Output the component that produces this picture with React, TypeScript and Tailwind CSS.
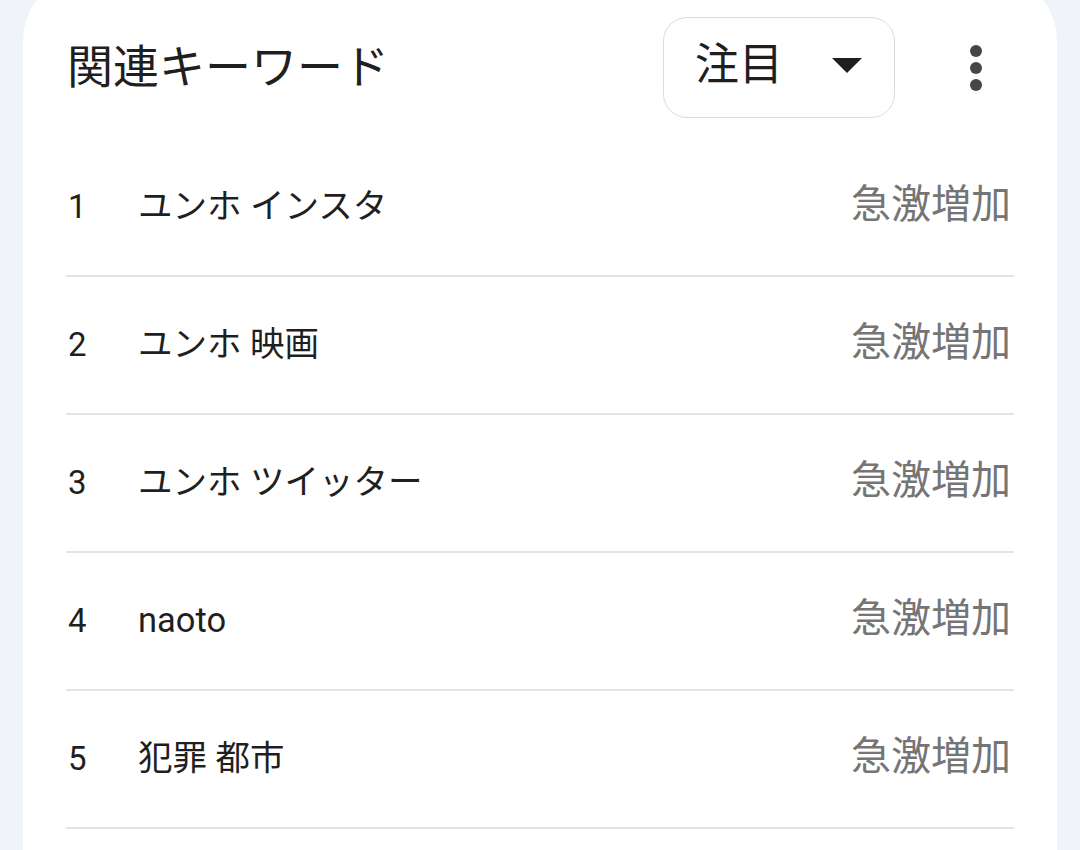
import React from "react";

const rows = [
  { n: 1, text: "ユンホ インスタ" },
  { n: 2, text: "ユンホ 映画" },
  { n: 3, text: "ユンホ ツイッター" },
  { n: 4, text: "naoto" },
  { n: 5, text: "犯罪 都市" },
];

const font = { fontFamily: 'Roboto, "Noto Sans CJK JP", sans-serif' };

export default function App() {
  return (
    <div className="w-[1080px] h-[850px] overflow-hidden bg-[#f0f4f9]" style={font}>
      <div className="ml-[23px] w-[1034px] mt-[-30px] h-[900px] bg-white rounded-t-[72px] px-[43px] pt-[30px]">
        <div className="h-[139px] flex items-center">
          <div className="flex-1 pl-[1px] pb-[6px] text-[46px] leading-none text-[#1f1f1f]">関連キーワード</div>
          <div className="w-[232px] h-[101px] mb-[5px] rounded-[24px] border-[1.5px] border-[#dcdcdc] flex items-center pl-[31px] pr-[32px]">
            <span className="flex-1 text-[44px] leading-none text-[#1f1f1f] pb-[4px]">注目</span>
            <svg width="30" height="16" viewBox="0 0 30 16" className="mb-[2px]">
              <path d="M0 0 L30 0 L15 15 Z" fill="#1f1f1f" />
            </svg>
          </div>
          <div className="ml-[57px] mr-[14px] mb-[4px] w-12 flex flex-col items-center gap-[5px]">
            <span className="w-3 h-3 rounded-full bg-[#444746]" />
            <span className="w-3 h-3 rounded-full bg-[#444746]" />
            <span className="w-3 h-3 rounded-full bg-[#444746]" />
          </div>
        </div>
        {rows.map((r) => (
          <div key={r.n} className="h-[138px] border-b-2 border-[#e3e3e3] flex items-center pb-[2px]">
            <span className="w-[72px] pl-[2px] text-[33px] leading-none text-[#1f1f1f]">{r.n}</span>
            <span className="flex-1 text-[34.5px] leading-none text-[#1f1f1f]">{r.text}</span>
            <span className="text-[40px] leading-none text-[#757575] pr-[3px] pb-[2px]">急激増加</span>
          </div>
        ))}
      </div>
    </div>
  );
}
